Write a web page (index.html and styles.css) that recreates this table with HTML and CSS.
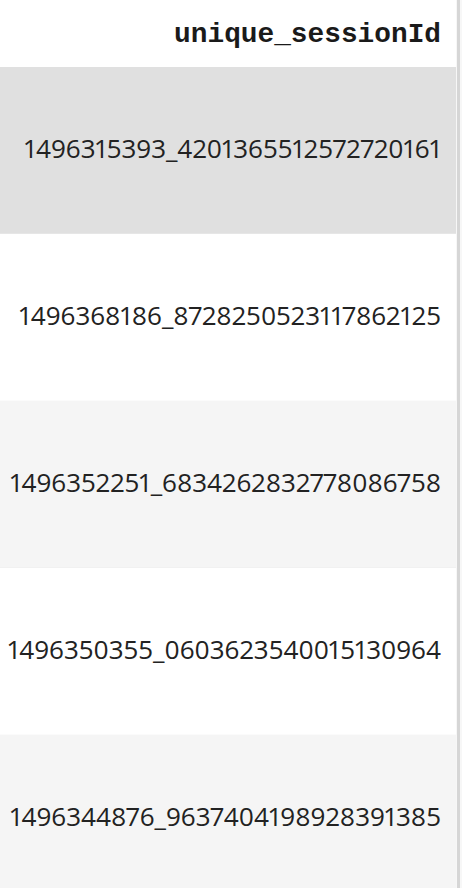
FILE: index.html
```html
<!DOCTYPE html>
<html>
<head>
<meta charset="utf-8">
<link rel="stylesheet" href="styles.css">
</head>
<body>
<div class="frame">
  <div class="grid">
    <div class="head">unique_sessionId</div>
    <div class="row r-hover">1496315393_4201365512572720161</div>
    <div class="row r-white">1496368186_8728250523117862125</div>
    <div class="row r-grey">1496352251_6834262832778086758</div>
    <div class="row r-white">1496350355_0603623540015130964</div>
    <div class="row r-grey">1496344876_9637404198928391385</div>
  </div>
  <div class="edge"><div class="edge-line"></div></div>
</div>
</body>
</html>
```
FILE: styles.css
```css
html, body {
  margin: 0;
  padding: 0;
  background: #ffffff;
  overflow: hidden;
}
.frame {
  display: flex;
  width: 462px;
  height: 888px;
  overflow: hidden;
}
.grid {
  width: 456px;
  display: flex;
  flex-direction: column;
  flex: none;
  overflow: hidden;
}
.head {
  height: 67px;
  flex: none;
  box-sizing: border-box;
  display: flex;
  align-items: center;
  justify-content: flex-end;
  padding-right: 15px;
  padding-top: 2px;
  font-family: "Liberation Mono", "Courier New", monospace;
  font-weight: bold;
  font-size: 27.8px;
  color: #1a1a1a;
  background: #ffffff;
}
.row {
  height: 167px;
  flex: none;
  box-sizing: border-box;
  display: flex;
  align-items: center;
  justify-content: flex-end;
  padding-right: 15px;
  padding-bottom: 4px;
  font-family: "Open Sans", "Noto Sans", sans-serif;
  font-variant-numeric: proportional-nums;
  font-feature-settings: "pnum" 1;
  font-size: 26.1px;
  color: #222222;
  white-space: nowrap;
  border-bottom: 1px solid rgba(0,0,0,0.015);
}
.r-hover { background: #e0e0e0; border-bottom-color: #e6e6e6; }
.r-white { background: #ffffff; }
.r-grey { background: #f5f5f5; }
.edge {
  width: 6px;
  flex: none;
  display: flex;
  background: #f7f7f7;
}
.edge-line {
  width: 3px;
  margin-left: 1px;
  background: #d6d6d6;
}
```
